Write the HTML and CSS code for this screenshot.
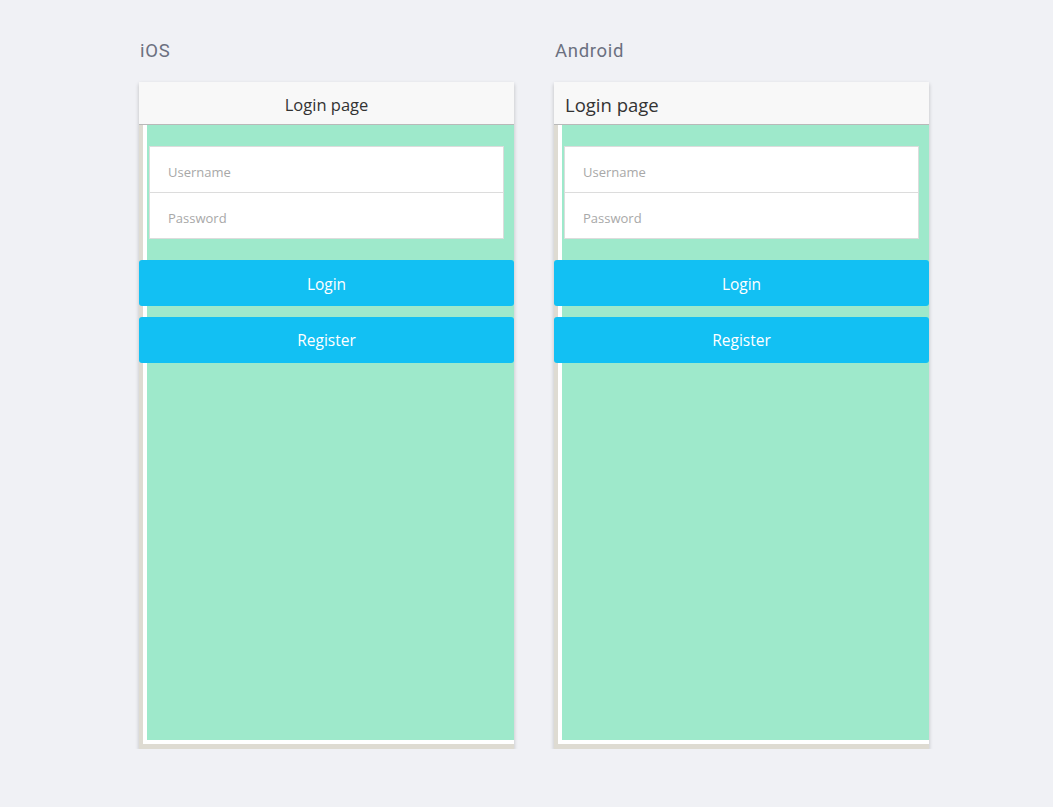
FILE: index.html
```html
<!DOCTYPE html>
<html>
<head>
<meta charset="utf-8">
<link rel="stylesheet" href="styles.css">
</head>
<body>
<div class="page">
  <div class="column">
    <div class="platform">iOS</div>
    <div class="device">
      <div class="header header-ios">Login page</div>
      <div class="frame">
        <div class="inner">
          <div class="content">
            <div class="form">
              <div class="field">Username</div>
              <div class="field">Password</div>
            </div>
            <div class="btn btn-first">Login</div>
            <div class="btn">Register</div>
          </div>
        </div>
      </div>
    </div>
  </div>
  <div class="column">
    <div class="platform">Android</div>
    <div class="device">
      <div class="header header-android">Login page</div>
      <div class="frame">
        <div class="inner">
          <div class="content">
            <div class="form">
              <div class="field">Username</div>
              <div class="field">Password</div>
            </div>
            <div class="btn btn-first">Login</div>
            <div class="btn">Register</div>
          </div>
        </div>
      </div>
    </div>
  </div>
</div>
</body>
</html>
```

FILE: styles.css
```css
html, body {
  margin: 0;
  padding: 0;
  background: #f0f1f5;
}
.page {
  display: flex;
  gap: 40px;
  padding: 41px 0 0 139px;
}
.column {
  width: 375px;
}
.platform {
  font-family: Roboto, "Liberation Sans", sans-serif;
  font-size: 18.5px;
  letter-spacing: 0.7px;
  color: #6b7080;
  height: 21px;
  line-height: 21px;
  margin-bottom: 20px;
  padding-left: 1px;
}
.device {
  width: 375px;
  height: 667px;
  display: flex;
  flex-direction: column;
  box-shadow: 0 2px 4px rgba(0, 0, 0, 0.22);
}
.header {
  flex: none;
  background: #f8f8f8;
  border-bottom: 1px solid #b9b9b9;
  font-family: "Open Sans", sans-serif;
  color: #333;
  display: flex;
  align-items: center;
  box-sizing: border-box;
  height: 43px;
  padding-top: 2px;
}
.header-ios {
  justify-content: center;
  font-size: 16.5px;
}
.header-android {
  font-size: 18.5px;
  padding-left: 11px;
}
.frame {
  flex: 1;
  background: #dedbd2;
  padding: 0 0 5px 4px;
  display: flex;
}
.inner {
  flex: 1;
  background: #ffffff;
  padding: 0 0 4px 4px;
  display: flex;
}
.content {
  flex: 1;
  background: #9ee9cb;
  padding-top: 21px;
}
.form {
  margin: 0 10px 0 2px;
  border: 1px solid #dcdcdc;
  background: #fff;
}
.field {
  height: 45px;
  line-height: 50px;
  padding-left: 18px;
  font-family: "Open Sans", sans-serif;
  font-size: 13px;
  color: #a8a8a8;
}
.field + .field {
  border-top: 1px solid #dcdcdc;
}
.btn {
  width: 375px;
  height: 46px;
  margin-left: -8px;
  margin-top: 11px;
  background: #12c0f3;
  border-radius: 3px;
  color: #fff;
  font-family: "Open Sans", sans-serif;
  font-size: 15.5px;
  display: flex;
  align-items: center;
  justify-content: center;
  padding-top: 2px;
  box-sizing: border-box;
}
.btn + .btn {
  padding-top: 0;
}
.btn-first {
  margin-top: 21px;
}
```
